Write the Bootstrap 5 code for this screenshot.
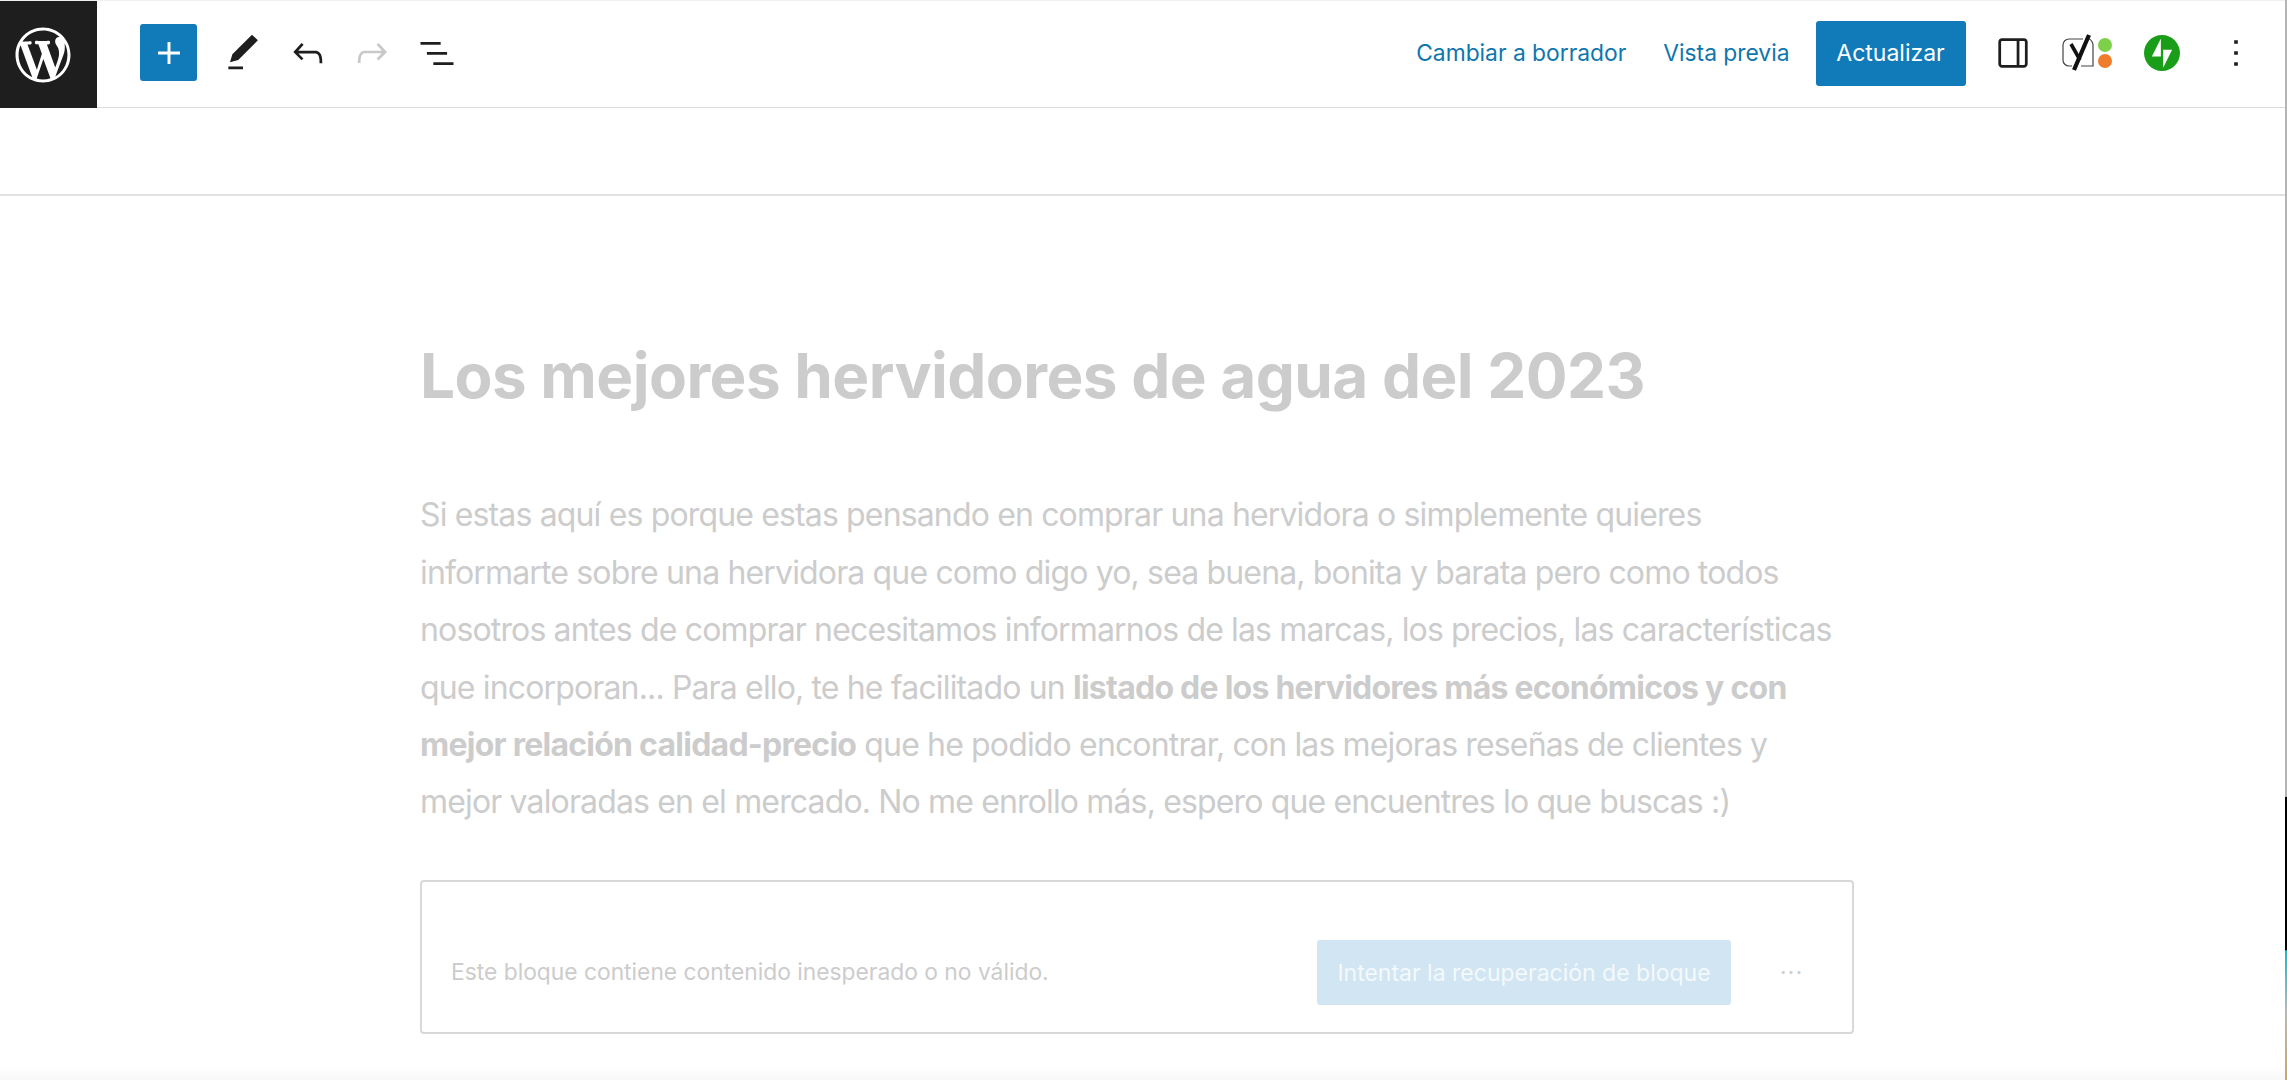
<!DOCTYPE html>
<html lang="es">
<head>
  <meta charset="UTF-8">
  <title>Editor</title>
  <link href="https://cdn.jsdelivr.net/npm/bootstrap@5.3.3/dist/css/bootstrap.min.css" rel="stylesheet">
  <style>
    html, body { height: 100%; }
    body { font-family: Inter, "Liberation Sans", sans-serif; background: linear-gradient(#fff 1066px, #f8f8f8 1080px); overflow: hidden; }
    .edit-shell { height: 1080px; border-right: 2px solid transparent; border-image: linear-gradient(#b4b4b4 0, #b4b4b4 796px, #000 797px, #000 949px, #14bccb 950px, #b8b8b8 1010px, #c9a866 1080px) 1; }
    .top-bar { height: 108px; border-top: 1px solid #f0f0f0; border-bottom: 1px solid #ddd; padding-bottom: 3px; }
    .wp-tile { width: 97px; height: 107px; background: #1e1e1e; padding-right: 11px; }
    .wp-tile svg { width: 66px; height: 66px; }
    .add-btn { width: 57px; height: 57px; margin: 0 14px 0 43px; background: #117ab8; border-radius: 3px; padding: 0; }
    .tool-btn { width: 64.5px; height: 57px; padding: 0; border: 0; background: none; }
    .tool-btn svg, .add-btn svg { width: 44px; height: 44px; }
    .tool-wide { width: 74.5px; }
    .tool-btn .yoast-ico { width: 50px; height: 38px; }
    .tool-btn .jet-ico { width: 36px; height: 36px; }
    .muted-ico { fill: #c9c9c9; }
    .link-txt { font-size: 22.8px; color: #0f76ae; text-decoration: none; padding-top: 2px; }
    .link-gap { margin-left: 37px; }
    .update-btn { width: 150px; height: 65px; margin: 1px 10px 0 26px; background: #117ab8; color: #fff; font-size: 23px; border-radius: 3px; padding: 0; }
    .right-tools { margin-right: 11.5px; }
    .second-bar { height: 88px; border-bottom: 2px solid #e2e2e2; }
    .doc-col { width: 1434px; margin-left: 420px; color: #ccc; }
    .doc-title { font-size: 62px; font-weight: 700; line-height: 1.2; margin: 143px 0 0; letter-spacing: -.55px; }
    .doc-text { font-size: 32px; line-height: 57.4px; margin: 73px 0 0; padding-right: 12px; letter-spacing: -.85px; }
    .doc-text strong { font-weight: 700; letter-spacing: -.75px; }
    .warn-box { height: 154px; margin-top: 49px; border: 2px solid #d8d8d8; border-radius: 4px; padding: 0 0 0 29px; }
    .warn-txt { font-size: 22.8px; color: #ccc; padding-top: 30px; }
    .fix-btn { width: 414px; height: 65px; margin-top: 32px; background: #d2e5f2; color: #f4f9fc; font-size: 23px; border-radius: 3px; padding: 0; }
    .more-dots { width: 121px; text-align: center; font-size: 24px; color: #d0d0d0; margin-top: 32px; letter-spacing: 1px; }
  </style>
</head>
<body>
<div class="edit-shell">
  <header class="top-bar d-flex align-items-center">
    <div class="wp-tile d-flex align-items-center justify-content-center align-self-start">
      <svg viewBox="-2 -2 24 24" fill="#fff"><path d="M20 10c0-5.51-4.49-10-10-10C4.48 0 0 4.49 0 10c0 5.52 4.48 10 10 10 5.51 0 10-4.48 10-10zM7.78 15.37L4.37 6.22c.55-.02 1.17-.08 1.17-.08.5-.06.44-1.13-.06-1.11 0 0-1.45.11-2.37.11-.18 0-.37 0-.58-.01C4.12 2.69 6.87 1.11 10 1.11c2.33 0 4.45.87 6.05 2.34-.68-.11-1.65.39-1.65 1.58 0 .74.45 1.36.9 2.1.35.61.55 1.36.55 2.46 0 1.49-1.4 5-1.4 5l-3.03-8.37c.54-.02.82-.17.82-.17.5-.05.44-1.25-.06-1.22 0 0-1.44.12-2.38.12-.87 0-2.33-.12-2.33-.12-.5-.03-.56 1.2-.06 1.22l.92.08 1.26 3.41zM17.41 10c.24-.64.74-1.87.43-4.25.7 1.29 1.05 2.71 1.05 4.25 0 3.29-1.73 6.24-4.4 7.78.97-2.59 1.94-5.2 2.92-7.78zM6.1 18.09C3.12 16.65 1.11 13.53 1.11 10c0-1.3.23-2.48.72-3.59C3.25 10.3 4.67 14.2 6.1 18.09zm4.03-6.63l2.58 6.98c-.86.29-1.76.45-2.71.45-.79 0-1.57-.11-2.29-.33.81-2.38 1.62-4.74 2.42-7.1z"/></svg>
    </div>
    <button class="btn add-btn d-flex align-items-center justify-content-center border-0" aria-label="Añadir">
      <svg viewBox="0 0 24 24" fill="#fff"><path d="M18 11.2h-5.2V6h-1.6v5.2H6v1.6h5.2V18h1.6v-5.2H18z"/></svg>
    </button>
    <button class="tool-btn d-flex align-items-center justify-content-center" aria-label="Herramientas">
      <svg viewBox="0 0 24 24" fill="#1e1e1e"><path d="M20.1 5.1L16.9 2 6.2 12.7l-1.3 4.4 4.5-1.3L20.1 5.1zM4 20.8h8v-1.5H4v1.5z"/></svg>
    </button>
    <button class="tool-btn d-flex align-items-center justify-content-center" aria-label="Deshacer">
      <svg viewBox="0 0 24 24" fill="#1e1e1e"><path d="M18.3 11.7c-.6-.6-1.4-.9-2.3-.9H6.7l2.9-3.3-1.1-1-4.5 5L8.5 16l1-1-2.7-2.7H16c.5 0 .9.2 1.3.5 1 1 1 3.4 1 4.5v.3h1.5v-.2c0-1.5 0-4.3-1.5-5.7z"/></svg>
    </button>
    <button class="tool-btn d-flex align-items-center justify-content-center" aria-label="Rehacer">
      <svg class="muted-ico" viewBox="0 0 24 24"><path d="M15.6 6.5l-1.1 1 2.9 3.3H8c-.9 0-1.7.3-2.3.9-1.4 1.5-1.4 4.2-1.4 5.6v.2h1.5v-.3c0-1.1 0-3.5 1-4.5.3-.3.7-.5 1.3-.5h9.2L14.5 15l1.1 1.1 4.6-4.6-4.6-5z"/></svg>
    </button>
    <button class="tool-btn d-flex align-items-center justify-content-center" aria-label="Vista de lista">
      <svg viewBox="0 0 24 24" fill="#1e1e1e"><path d="M3 6h11v1.5H3V6zm3.5 5.5h11V13h-11v-1.5zM21 17H10v1.5h11V17z"/></svg>
    </button>

    <div class="ms-auto right-tools d-flex align-items-center">
      <a href="#" class="link-txt">Cambiar a borrador</a>
      <a href="#" class="link-txt link-gap">Vista previa</a>
      <button class="btn update-btn border-0">Actualizar</button>
      <button class="tool-btn tool-wide d-flex align-items-center justify-content-center" aria-label="Ajustes">
        <svg viewBox="0 0 24 24" fill="#1e1e1e"><path d="M18 4H6c-1.1 0-2 .9-2 2v12c0 1.1.9 2 2 2h12c1.1 0 2-.9 2-2V6c0-1.1-.9-2-2-2zM6 18.5c-.3 0-.5-.2-.5-.5V6c0-.3.2-.5.5-.5h8v13H6zm12.5-.5c0 .3-.2.5-.5.5h-2.5v-13H18c.3 0 .5.2.5.5v12z"/></svg>
      </button>
      <button class="tool-btn tool-wide d-flex align-items-center justify-content-center" aria-label="Yoast SEO">
        <svg class="yoast-ico" viewBox="0 0 50 38"><path d="M21 5H7a6 6 0 0 0-6 6v15a6 6 0 0 0 6 6h3M19 32h12V11c0-2-2-6-4-6" fill="none" stroke="#444" stroke-width="1.2"/><path d="M27 1 L12 36" stroke="#111" stroke-width="4.2" fill="none"/><path d="M9 10 L18 26" stroke="#111" stroke-width="3.6" fill="none"/><circle cx="43" cy="11" r="7" fill="#7ed04b"/><circle cx="43" cy="27" r="7" fill="#ee7c2b"/></svg>
      </button>
      <button class="tool-btn tool-wide d-flex align-items-center justify-content-center" aria-label="Jetpack">
        <svg class="jet-ico" viewBox="0 0 32 32" fill="#1a9e1a"><path d="M16 0C7.2 0 0 7.2 0 16s7.2 16 16 16 16-7.2 16-16S24.8 0 16 0zM15 19H7l8-16v16zM17 29V13h8l-8 16z"/></svg>
      </button>
      <button class="tool-btn tool-wide d-flex align-items-center justify-content-center" aria-label="Opciones">
        <svg viewBox="0 0 24 24" fill="#1e1e1e"><path d="M13 19h-2v-2h2v2zm0-6h-2v-2h2v2zm0-6h-2V5h2v2z"/></svg>
      </button>
    </div>
  </header>

  <div class="second-bar"></div>

  <main class="doc-col">
    <h1 class="doc-title">Los mejores hervidores de agua del 2023</h1>
    <p class="doc-text">Si estas aquí es porque estas pensando en comprar una hervidora o simplemente quieres informarte sobre una hervidora que como digo yo, sea buena, bonita y barata pero como todos nosotros antes de comprar necesitamos informarnos de las marcas, los precios, las características que incorporan... Para ello, te he facilitado un <strong>listado de los hervidores más económicos y con mejor relación calidad-precio</strong> que he podido encontrar, con las mejoras reseñas de clientes y mejor valoradas en el mercado. No me enrollo más, espero que encuentres lo que buscas :)</p>
    <div class="warn-box d-flex align-items-center justify-content-between">
      <span class="warn-txt">Este bloque contiene contenido inesperado o no válido.</span>
      <div class="d-flex align-items-center">
        <button class="btn fix-btn border-0">Intentar la recuperación de bloque</button>
        <span class="more-dots">···</span>
      </div>
    </div>
  </main>
</div>
</body>
</html>
